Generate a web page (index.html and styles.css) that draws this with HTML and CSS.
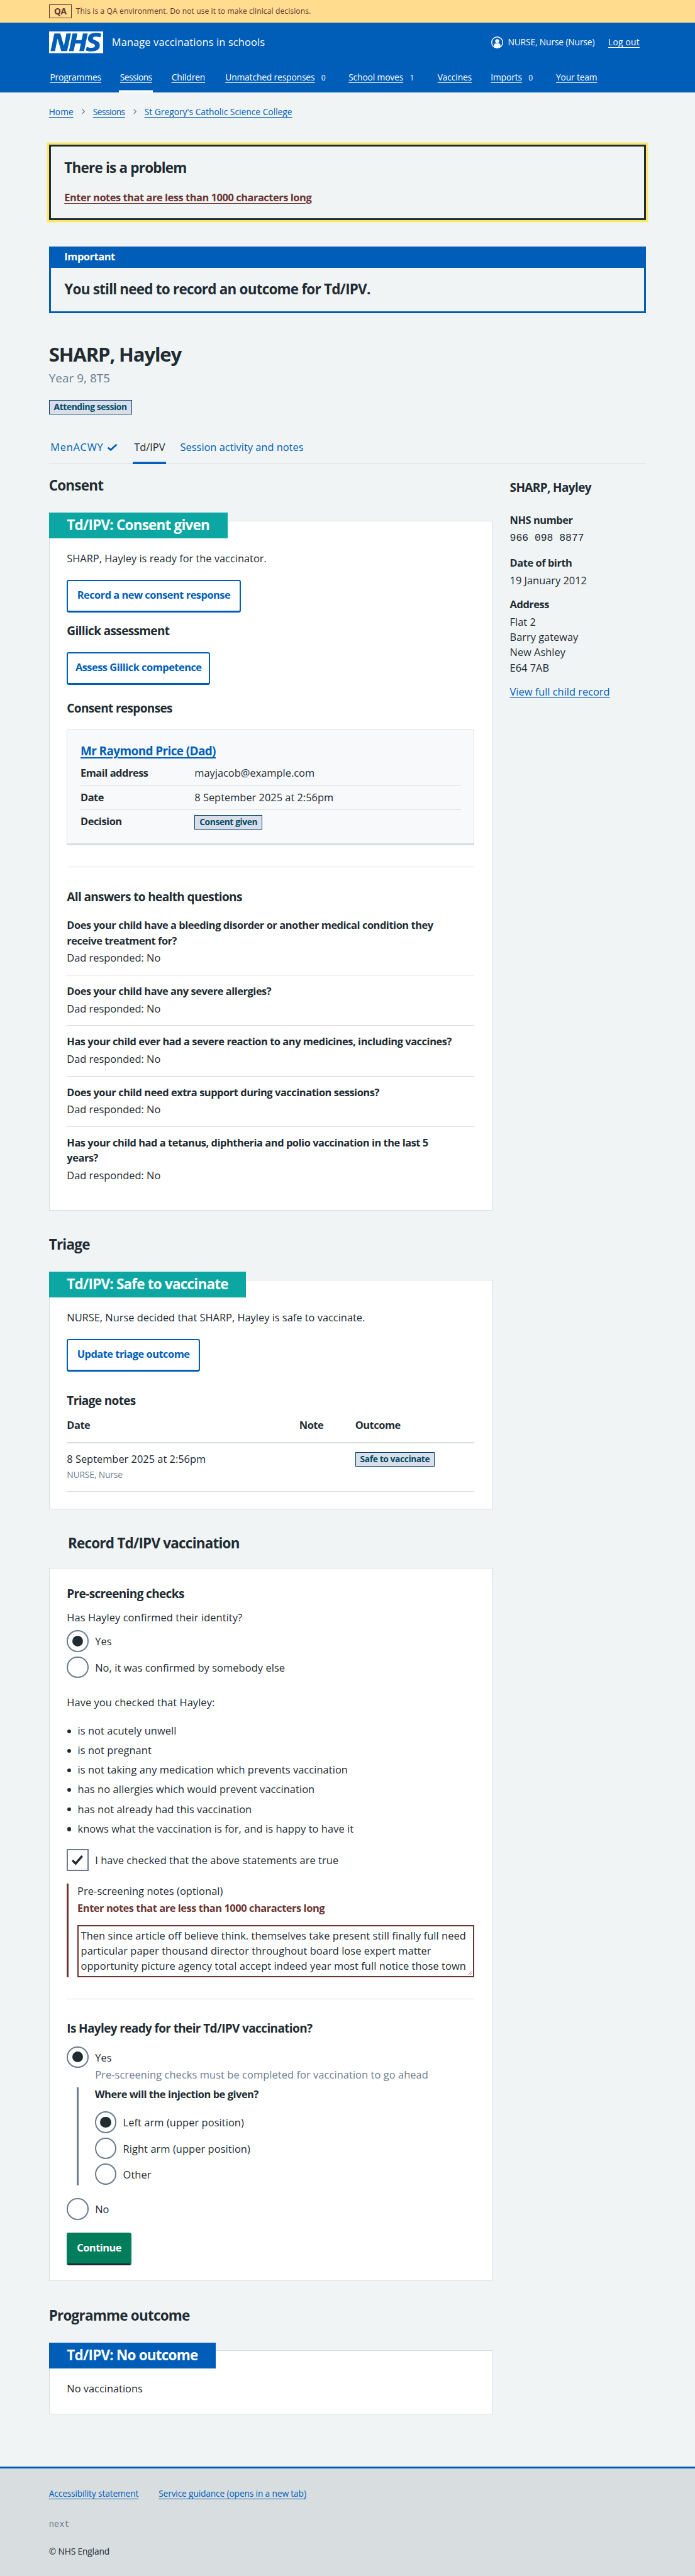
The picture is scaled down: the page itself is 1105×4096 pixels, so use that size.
FILE: index.html
```html
<!DOCTYPE html>
<html lang="en">
<head>
<meta charset="utf-8">
<title>SHARP, Hayley – Manage vaccinations in schools</title>
<link rel="stylesheet" href="styles.css">
</head>
<body>
<div class="page">
<div class="env"><span class="env-tag">QA</span><span class="env-text">This is a QA environment. Do not use it to make clinical decisions.</span></div>
<header class="header">
  <div class="header-top">
    <svg class="logo" viewBox="0 0 40 16"><path fill="#fff" d="M0 0h40v16H0z"/><path fill="#005eb8" d="M3.9 1.5h4.4l2.6 9h.1l1.8-9h3.3l-2.8 13H9l-2.7-9h-.1l-1.8 9H1.1M17.3 1.5h3.6l-1 4.9h4L25 1.5h3.5l-2.7 13h-3.5l1.1-5.6h-4.1l-1.2 5.6h-3.4M37.7 4.4c-.7-.3-1.6-.6-2.9-.6-1.4 0-2.5.2-2.5 1.3 0 1.8 5.1 1.2 5.1 5.1 0 3.6-3.3 4.5-6.4 4.5-1.3 0-2.9-.3-4-.7l.8-2.7c.7.4 2.1.7 3.2.7s2.800-.2 2.800-1.500c0-2.100-5.100-1.300-5.100-5 0-3.400 2.900-4.400 5.800-4.400 1.600 0 3.100.2 4 .6"/></svg>
    <span class="service">Manage vaccinations in schools</span>
    <div class="account">
      <svg class="user" viewBox="0 0 24 24"><circle cx="12" cy="12" r="11.100" fill="none" stroke="#fff" stroke-width="1.800"/><circle cx="12" cy="9.300" r="4" fill="#fff"/><path fill="#fff" d="M5.500 20v-2a4 4 0 0 1 4-4h5a4 4 0 0 1 4 4v2c-2 2-4 3-6.500 3s-4.500-1-6.500-3z"/></svg>
      <span>NURSE, Nurse (Nurse)</span><a class="logout">Log out</a>
    </div>
  </div>
  <nav class="nav">
    <div class="w1"><a>Programmes</a></div>
    <div class="w2"><a class="current tight">Sessions</a></div>
    <div class="w3"><a>Children</a></div>
    <div class="w4"><a>Unmatched responses</a><span class="count">0</span></div>
    <div class="w5"><a>School moves</a><span class="count">1</span></div>
    <div class="w6"><a>Vaccines</a></div>
    <div class="w7"><a>Imports</a><span class="count">0</span></div>
    <div><a>Your team</a></div>
  </nav>
</header>
<main class="main">
  <nav class="crumbs"><a>Home</a><svg viewBox="0 0 6 10"><path d="M1 1l4 4-4 4"/></svg><a class="tight">Sessions</a><svg viewBox="0 0 6 10"><path d="M1 1l4 4-4 4"/></svg><a>St Gregory's Catholic Science College</a></nav>
  <section class="errors"><h2>There is a problem</h2><a class="b">Enter notes that are less than 1000 characters long</a></section>
  <section class="banner"><div class="banner-title b">Important</div><h2>You still need to record an outcome for Td/IPV.</h2></section>
  <h1>SHARP, Hayley</h1>
  <p class="caption">Year 9, 8T5</p>
  <span class="tag">Attending session</span>
  <nav class="tabs"><a class="tab-a">MenACWY<svg viewBox="0 0 20 14"><path d="M2 8l5 4L18 2"/></svg></a><a class="tab-b">Td/IPV</a><a class="tab-c">Session activity and notes</a></nav>
  <div class="columns">
    <div>
      <h2 class="first">Consent</h2>
      <section class="card consent">
        <h2 class="flag">Td/IPV: Consent given</h2>
        <p class="lead">SHARP, Hayley is ready for the vaccinator.</p>
        <a class="button bw1">Record a new consent response</a>
        <h3 class="gillick">Gillick assessment</h3>
        <a class="button bw2">Assess Gillick competence</a>
        <h3 class="responses">Consent responses</h3>
        <div class="inner">
          <h3><a>Mr Raymond Price (Dad)</a></h3>
          <dl>
            <div><dt>Email address</dt><dd>mayjacob@example.com</dd></div>
            <div><dt>Date</dt><dd>8 September 2025 at 2:56pm</dd></div>
            <div><dt>Decision</dt><dd><span class="tag">Consent given</span></dd></div>
          </dl>
        </div>
        <hr>
        <h3 class="answers">All answers to health questions</h3>
        <div class="qa"><p class="b">Does your child have a bleeding disorder or another medical condition they<br>receive treatment for?</p><p>Dad responded: No</p></div>
        <div class="qa"><p class="b">Does your child have any severe allergies?</p><p>Dad responded: No</p></div>
        <div class="qa"><p class="b">Has your child ever had a severe reaction to any medicines, including vaccines?</p><p>Dad responded: No</p></div>
        <div class="qa"><p class="b">Does your child need extra support during vaccination sessions?</p><p>Dad responded: No</p></div>
        <div class="qa"><p class="b">Has your child had a tetanus, diphtheria and polio vaccination in the last 5<br>years?</p><p>Dad responded: No</p></div>
      </section>
      <h2 class="section">Triage</h2>
      <section class="card triage">
        <h2 class="flag">Td/IPV: Safe to vaccinate</h2>
        <p class="lead">NURSE, Nurse decided that SHARP, Hayley is safe to vaccinate.</p>
        <a class="button bw3">Update triage outcome</a>
        <h3 class="notes">Triage notes</h3>
        <div class="row head b"><span>Date</span><span>Note</span><span>Outcome</span></div>
        <div class="row"><div>8 September 2025 at 2:56pm<div class="by">NURSE, Nurse</div></div><span></span><span><span class="tag">Safe to vaccinate</span></span></div>
      </section>
      <h2 class="section indent">Record Td/IPV vaccination</h2>
      <section class="card record">
        <h3 class="pre">Pre-screening checks</h3>
        <p class="ask">Has Hayley confirmed their identity?</p>
        <div class="choices">
          <label class="choice"><i class="radio on"></i>Yes</label>
          <label class="choice"><i class="radio"></i>No, it was confirmed by somebody else</label>
        </div>
        <p class="have">Have you checked that Hayley:</p>
        <ul>
          <li>is not acutely unwell</li>
          <li>is not pregnant</li>
          <li>is not taking any medication which prevents vaccination</li>
          <li>has no allergies which would prevent vaccination</li>
          <li>has not already had this vaccination</li>
          <li>knows what the vaccination is for, and is happy to have it</li>
        </ul>
        <label class="choice"><i class="box"><svg viewBox="0 0 24 20"><path d="M2.500 10.500l6 6L20.500 2.500"/></svg></i>I have checked that the above statements are true</label>
        <div class="invalid">
          <p>Pre-screening notes (optional)</p>
          <p class="b message">Enter notes that are less than 1000 characters long</p>
          <div class="textarea">Then since article off believe think. themselves take present still finally full need<br>particular paper thousand director throughout board lose expert matter<br>opportunity picture agency total accept indeed year most full notice those town<svg viewBox="0 0 10 10"><path d="M1 9l8-8M5 9l4-4"/></svg></div>
        </div>
        <hr>
        <h3 class="ready">Is Hayley ready for their Td/IPV vaccination?</h3>
        <label class="choice"><i class="radio on"></i>Yes</label>
        <p class="hint">Pre-screening checks must be completed for vaccination to go ahead</p>
        <div class="conditional">
          <p class="b">Where will the injection be given?</p>
          <div class="choices">
            <label class="choice"><i class="radio on"></i>Left arm (upper position)</label>
            <label class="choice"><i class="radio"></i>Right arm (upper position)</label>
            <label class="choice"><i class="radio"></i>Other</label>
          </div>
        </div>
        <label class="choice"><i class="radio"></i>No</label>
        <a class="button primary">Continue</a>
      </section>
      <h2 class="section">Programme outcome</h2>
      <section class="card outcome">
        <h2 class="flag blue">Td/IPV: No outcome</h2>
        <p class="lead">No vaccinations</p>
      </section>
    </div>
    <aside>
      <h3>SHARP, Hayley</h3>
      <p class="b nhs">NHS number</p><p class="mono">966 098 8877</p>
      <p class="b dob">Date of birth</p><p class="val">19 January 2012</p>
      <p class="b term">Address</p><p class="val">Flat 2<br>Barry gateway<br>New Ashley<br>E64 7AB</p>
      <p class="term"><a>View full child record</a></p>
    </aside>
  </div>
</main>
<footer>
  <div class="links"><a>Accessibility statement</a><a>Service guidance (opens in a new tab)</a></div>
  <p class="release">next</p>
  <p class="copy">© NHS England</p>
</footer>
</div>
</body>
</html>
```
FILE: styles.css
```css
* { box-sizing: border-box; margin: 0; padding: 0; }
html { background: #d8dde0; }
.page {
  zoom: 0.86328;
  background: #f0f4f5;
  color: #212b32;
  font: 19px/28px "Open Sans", "Noto Sans", sans-serif;
  letter-spacing: 0;
}
p, a, span, h1, h2, h3, li, label { white-space: nowrap; }
a { color: #005eb8; text-decoration: underline; text-decoration-thickness: 1px; text-underline-offset: 3px; }
h1, h2, h3, .b { font-weight: 700; }
.b { letter-spacing: -0.027em; }
.tight { letter-spacing: -0.04em; }
h1 { font-size: 36px; line-height: 44px; margin-top: 53px; letter-spacing: -0.036em; }
h2 { font-size: 26px; line-height: 32px; letter-spacing: -0.034em; }
h3 { font-size: 22px; line-height: 28px; letter-spacing: -0.033em; }
hr { border: 0; border-top: 1px solid #d8dde0; margin-top: 40px; }

.env { display: flex; align-items: center; gap: 8px; height: 42px; padding: 0 90px; background: #ffdc8e; color: #6b3531; font-size: 16px; line-height: 24px; }
.env-tag { width: 42px; height: 26px; border: 1px solid #6b3531; text-align: center; font-weight: 700; letter-spacing: -0.028em; }
.env-text { padding-top: 1px; font-size: 14px; letter-spacing: 0.008em; }

.header { height: 128px; padding: 16px 90px 0; background: #005eb8; color: #fff; font-size: 16px; line-height: 24px; letter-spacing: -0.01em; }
.header a { color: #fff; }
.header-top { display: flex; align-items: center; height: 40px; margin-bottom: 24px; }
.logo { width: 100px; height: 40px; margin-right: 16px; }
.service { font-size: 19px; letter-spacing: 0.008em; }
.account { display: flex; align-items: center; margin: 1px 12px 0 auto; }
.user { width: 22px; height: 22px; margin-right: 9px; }
.logout { margin-left: 25px; letter-spacing: 0.018em; }
.nav { display: flex; height: 48px; padding: 8.800px 2px 0; }
.nav a { display: inline-block; height: 39.200px; }
.nav .current { box-shadow: inset 0 -4px #fff; padding: 0 2px; margin: 0 -2px; }
.count { font-size: 14px; margin-left: 12px; }
.w1 { width: 129px; } .w2 { width: 95px; } .w3 { width: 99px; } .w4 { width: 227px; }
.w5 { width: 164px; } .w6 { width: 98px; } .w7 { width: 120px; }

.main { padding: 0 90px; }
.crumbs { display: flex; height: 96px; padding-top: 24.800px; font-size: 16px; line-height: 24px; }
.crumbs svg { width: 6px; height: 10px; margin: 6px 15px 0; fill: none; stroke: #6b7d8f; stroke-width: 1.600; }
.errors { height: 140px; padding: 23.900px 25px 0; border: 4px solid #212b32; box-shadow: 0 0 0 4px #fae76a; }
.errors a { display: block; margin-top: 24px; color: #6b3531; }
.banner { height: 123px; margin-top: 48px; border: 4px solid #005eb8; }
.banner-title { height: 35.500px; padding: 1.600px 25px 0; background: #005eb8; color: #fff; }
.banner h2 { padding: 23.400px 25px 0; }
.caption { margin-top: 7.500px; font-size: 22px; line-height: 32px; color: #6b7d8f; }
.tag { display: block; width: fit-content; height: 26px; padding: 0 8px; border: 1px solid #003b69; background: #dadeeb; color: #004c63; font-size: 16px; line-height: 24px; font-weight: 700; letter-spacing: -0.028em; }
.caption + .tag { margin-top: 23.500px; }
.tabs { display: flex; height: 60px; margin-top: 32px; border-bottom: 1px solid #d8dde0; }
.tabs a { height: 60px; padding: 15px 3px 0; text-decoration: none; }
.tab-a { width: 155px; letter-spacing: 0.045em; }
.tab-a svg { width: 20px; height: 14px; margin-left: 7px; fill: none; stroke: #005eb8; stroke-width: 3.200; }
.tabs .tab-b { width: 61px; margin-right: 23px; padding-left: 2px; color: #212b32; box-shadow: inset 0 -4px #005eb8; }

.columns { display: grid; grid-template-columns: 817px 1fr; gap: 32px; }
.first { padding-top: 23px; margin-bottom: 49px; }
.section { margin: 47px 0 48.500px; }
.indent { margin-left: 35px; margin-bottom: 29px; }
.card { border: 1px solid #d8dde0; background: #fff; padding: 0 32px; }
.consent { height: 1270.500px; }
.triage { height: 423px; }
.record { height: 1314px; letter-spacing: 0.005em; }
.outcome { height: 118px; }
.flag { width: fit-content; height: 48px; margin: -16px 0 0 -33px; padding: 7px 33px 0; background: #0ca7a2; color: #fff; }
.flag.blue { background: #005eb8; }
.lead { margin-top: 23px; }
.button { display: block; height: 60px; margin-top: 25px; padding-top: 11.300px; border: 2.400px solid #005eb8; border-bottom-width: 4px; border-radius: 4px; font-weight: 700; letter-spacing: -0.03em; text-align: center; text-decoration: none; }
.bw1 { width: 320px; } .bw2 { width: 264px; } .bw3 { width: 245px; }
.gillick { margin-top: 20.500px; }
.responses { margin-top: 28.500px; }
.inner { height: 213px; margin-top: 25.500px; padding: 24.500px 24px 0; border: 1px solid #d8dde0; border-bottom: 4px solid #d5dddd; background: #f8f9fb; }
.inner h3 a { text-decoration-thickness: 2px; }
.inner dl { padding-top: 5.500px; }
.inner dl div { display: flex; height: 45px; padding-top: 7px; border-bottom: 1px solid #d8dde0; }
.inner dl div:last-child { border: 0; }
.inner dt { width: 210px; font-weight: 700; letter-spacing: -0.028em; }
.inner .tag { margin-top: 2px; }
.answers { margin: 40.500px 0 9.500px; }
.qa { padding: 15px 0 17px; border-bottom: 1px solid #d8dde0; }
.qa:last-child { border: 0; }
.qa p + p { margin-top: 4px; }
.notes { margin: 40px 0 17px; }
.row { display: grid; grid-template-columns: 428px 103px 1fr; padding: 15.300px 0 17px; border-bottom: 1px solid #d8dde0; }
.row.head { padding: 0 0 17px; border-bottom-width: 2.400px; }
.row .tag { margin-top: 1.700px; }
.by { margin-top: 3.700px; font-size: 16px; line-height: 24px; letter-spacing: -0.01em; color: #6b7d8f; }

.pre { margin-top: 32.500px; }
.ask { margin: 16.500px 0 9px; }
.choices { display: grid; gap: 8px; }
.choice { display: flex; height: 40px; line-height: 42px; }
.choice i { width: 40px; height: 40px; margin-right: 12px; border: 2.400px solid #6b7d8f; background: #fff; }
.radio { display: grid; place-items: center; border-radius: 50%; }
.radio.on::before { content: ""; width: 20px; height: 20px; border-radius: 50%; background: #212b32; }
.box { display: grid; place-items: center; }
.box svg { width: 24px; height: 20px; fill: none; stroke: #212b32; stroke-width: 4; }
.have { margin: 31px 0 24.400px; }
ul { list-style: none; margin-bottom: 23.600px; }
li { display: flex; align-items: center; }
li + li { margin-top: 8px; }
li::before { content: ""; width: 7px; height: 7px; margin: 2px 12px 0 1px; border-radius: 50%; background: #212b32; }
.invalid { display: flow-root; height: 172px; margin-top: 24px; padding-left: 16px; border-left: 4px solid #6b3531; }
.invalid p:first-child { margin-top: -0.800px; }
.invalid .message { margin: 4px 0 16.800px; color: #6b3531; }
.textarea { position: relative; height: 96px; padding: 3.400px 4px 0; border: 2.400px solid #6b3531; white-space: nowrap; }
.textarea svg { position: absolute; right: 1px; bottom: 1px; width: 9px; height: 9px; fill: none; stroke: #667; stroke-width: 1; }
.ready { margin: 39.500px 0 18.500px; }
.hint { margin: -1px 0 9px 52px; color: #6b7d8f; }
.conditional { display: flow-root; height: 180px; margin: 0 0 24px 18px; padding-left: 30px; border-left: 4px solid #6b7d8f; }
.conditional p { margin-top: -0.800px; margin-bottom: 16.800px; }
.primary { width: 119px; margin-top: 24px; border-color: #007d5b #007d5b #212b32; background: #007d5b; color: #fff; }

aside h3 { margin-top: 28.500px; }
.nhs { margin-top: 32.500px; }
.mono { margin-top: 6.400px; font-family: "Liberation Mono", monospace; letter-spacing: 0; }
.dob { margin-top: 16.600px; }
.term { margin-top: 17px; }
.val { margin-top: 4px; }

footer { height: 200px; margin-top: 96px; padding: 34.600px 90px 0; border-top: 4px solid #005eb8; background: #d8dde0; font-size: 16px; line-height: 24px; letter-spacing: -0.012em; }
.links { display: flex; gap: 37px; }
.release { margin-top: 33.900px; font-family: "Liberation Mono", monospace; letter-spacing: 0; color: #6b7d8f; }
.copy { margin-top: 24.700px; }
```
